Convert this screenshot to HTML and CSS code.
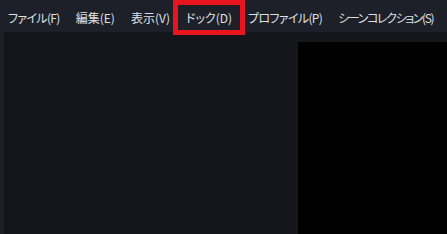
FILE: index.html
```html
<!DOCTYPE html>
<html lang="ja">
<head>
<meta charset="utf-8">
<link rel="stylesheet" href="styles.css">
</head>
<body>
<div class="menubar">
  <div class="item kana">ファイル(F)</div>
  <div class="item">編集(E)</div>
  <div class="item">表示(V)</div>
  <div class="item highlight">ドック(D)</div>
  <div class="item kana">プロファイル(P)</div>
  <div class="item kana long">シーンコレクション(S)</div>
</div>
<div class="main">
  <div class="panel">
    <div class="preview"></div>
  </div>
</div>
</body>
</html>
```
FILE: styles.css
```css
html, body {
  margin: 0;
  padding: 0;
  height: 100%;
  background: #1e2029;
  overflow: hidden;
}
body {
  display: flex;
  flex-direction: column;
  font-family: "Noto Sans CJK JP", "Noto Sans", sans-serif;
  font-size: 12px;
  color: #dfe1e6;
}
.menubar {
  display: flex;
  align-items: flex-start;
  height: 32px;
  box-sizing: border-box;
  padding-top: 5px;
  flex: none;
}
.item {
  height: 25px;
  line-height: 25px;
  padding: 0 8px;
  font-feature-settings: "palt";
  white-space: nowrap;
  position: relative;
}
.kana {
  letter-spacing: -0.65px;
}
.long {
  letter-spacing: -1.4px;
}
.highlight {
  outline: 5px solid #e8151e;
  z-index: 1;
}
.main {
  flex: 1;
  display: flex;
  padding-left: 4px;
}
.panel {
  flex: 1;
  background: #15161b;
  display: flex;
  justify-content: flex-end;
  padding-top: 10px;
}
.preview {
  width: 149px;
  background: #000;
}
```
